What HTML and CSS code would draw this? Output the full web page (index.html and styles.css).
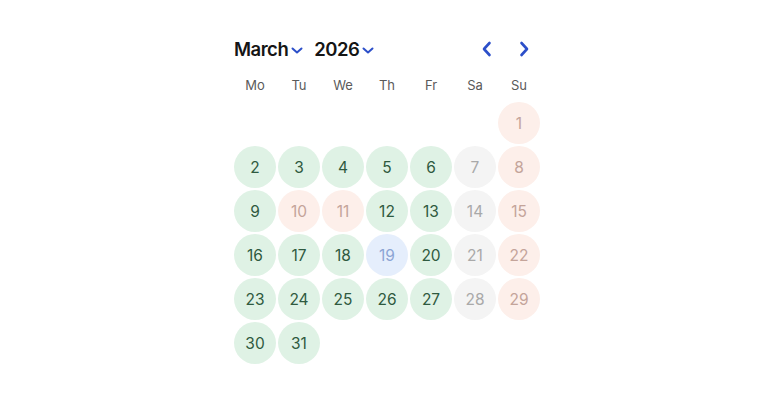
FILE: index.html
```html
<!DOCTYPE html>
<html lang="en">
   <head>
      <meta charset="UTF-8" />
      <meta name="viewport" content="width=device-width, initial-scale=1.0"/>
      <title>Calendar</title>
      <link rel="stylesheet" href="styles.css">
   </head>
   <body>
      <div class="calendar">
         <!-- Cabeçalho: mês, ano e navegação -->
         <div class="cal-header">
            <div class="selects">
               <div class="select">March
                  <svg width="12" height="7" viewBox="0 0 12 7"><path d="M1.5 1.5 L6 5.5 L10.5 1.5" fill="none" stroke="#2c4fc9" stroke-width="2" stroke-linecap="round" stroke-linejoin="round"/></svg>
               </div>
               <div class="select">2026
                  <svg width="12" height="7" viewBox="0 0 12 7"><path d="M1.5 1.5 L6 5.5 L10.5 1.5" fill="none" stroke="#2c4fc9" stroke-width="2" stroke-linecap="round" stroke-linejoin="round"/></svg>
               </div>
            </div>
            <div class="nav">
               <button class="nav-btn" aria-label="Previous month">
                  <svg width="12" height="16" viewBox="0 0 12 16"><path d="M8.5 2 L3 8 L8.5 14" fill="none" stroke="#2c4fc9" stroke-width="2.6" stroke-linecap="round" stroke-linejoin="round"/></svg>
               </button>
               <button class="nav-btn" aria-label="Next month">
                  <svg width="12" height="16" viewBox="0 0 12 16"><path d="M3.5 2 L9 8 L3.5 14" fill="none" stroke="#2c4fc9" stroke-width="2.6" stroke-linecap="round" stroke-linejoin="round"/></svg>
               </button>
            </div>
         </div>
         <div class="weekdays">
            <span>Mo</span><span>Tu</span><span>We</span><span>Th</span><span>Fr</span><span>Sa</span><span>Su</span>
         </div>
         <div class="days" id="days"></div>
      </div>
      <script>
         // tipos: g = disponível, r = fechado, s = sábado, b = hoje
         const tipos = {
           1: "r", 7: "s", 8: "r", 10: "r", 11: "r", 14: "s", 15: "r",
           19: "b", 21: "s", 22: "r", 28: "s", 29: "r"
         };
         const grid = document.getElementById("days");
         // março de 2026 começa num domingo
         for (let i = 0; i < 6; i++) {
           grid.appendChild(document.createElement("span"));
         }
         for (let d = 1; d <= 31; d++) {
           const el = document.createElement("span");
           el.className = "day day-" + (tipos[d] || "g");
           el.textContent = d;
           grid.appendChild(el);
         }
      </script>
   </body>
</html>
```

FILE: styles.css
```css
body {
margin: 0;
padding-left: 4px;
font-family: "Inter", "Noto Sans", sans-serif;
background: #fff;
}
.calendar {
width: 306px;
margin: 0 auto;
padding-top: 34px;
}
.cal-header {
display: flex;
justify-content: space-between;
align-items: center;
height: 30px;
}
.selects {
display: flex;
align-items: center;
gap: 11px;
}
.select {
display: flex;
align-items: center;
gap: 3px;
font-size: 18.5px;
font-weight: 600;
color: #151515;
letter-spacing: -0.5px;
}
.select svg {
margin-top: 2px;
}
.nav {
display: flex;
gap: 9px;
margin-right: 2px;
}
.nav-btn {
width: 28px;
height: 28px;
border: none;
background: none;
padding: 0;
display: flex;
justify-content: center;
align-items: center;
}
.weekdays {
display: grid;
grid-template-columns: repeat(7, 42px);
column-gap: 2px;
margin-top: 12px;
height: 18px;
align-items: center;
font-size: 13px;
color: #5a5a5a;
text-align: center;
}
.days {
display: grid;
grid-template-columns: repeat(7, 42px);
grid-auto-rows: 42px;
gap: 2px;
margin-top: 8px;
}
.day {
border-radius: 50%;
display: flex;
justify-content: center;
align-items: center;
font-size: 15.5px;
}
.day-g {
background: #dff2e5;
color: #2f5a40;
}
.day-r {
background: #fdefea;
color: #c4a49a;
}
.day-s {
background: #f4f4f4;
color: #a9a9a9;
}
.day-b {
background: #e5eefc;
color: #8ca5d4;
}
```
